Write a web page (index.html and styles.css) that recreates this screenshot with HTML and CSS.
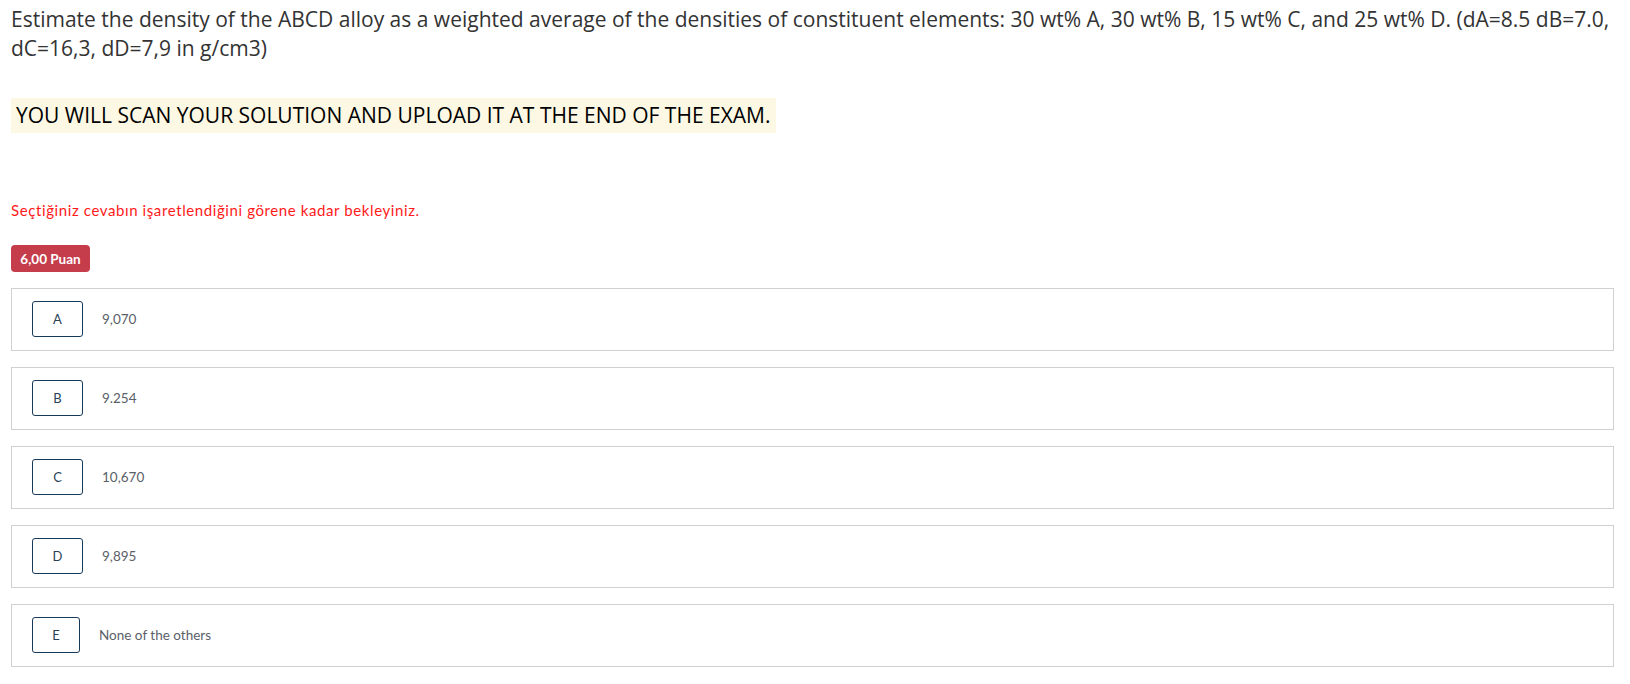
FILE: index.html
```html
<!DOCTYPE html>
<html lang="tr">
<head>
<meta charset="utf-8">
<title>Soru</title>
<link rel="stylesheet" href="styles.css">
</head>
<body>
<div class="page">
  <div class="question">
    <p class="stem">Estimate the density of the ABCD alloy as a weighted average of the densities of constituent elements: 30 wt% A, 30 wt% B, 15 wt% C, and 25 wt% D. (dA=8.5 dB=7.0, dC=16,3, dD=7,9 in g/cm3)</p>
    <p class="notice">YOU WILL SCAN YOUR SOLUTION AND UPLOAD IT AT THE END OF THE EXAM.</p>
  </div>
  <p class="warning">Seçtiğiniz cevabın işaretlendiğini görene kadar bekleyiniz.</p>
  <div class="badge-row"><span class="badge">6,00 Puan</span></div>
  <div class="options">
    <div class="option"><span class="letter">A</span><span class="answer">9,070</span></div>
    <div class="option"><span class="letter">B</span><span class="answer">9.254</span></div>
    <div class="option"><span class="letter">C</span><span class="answer">10,670</span></div>
    <div class="option"><span class="letter">D</span><span class="answer">9,895</span></div>
    <div class="option"><span class="letter letter-narrow">E</span><span class="answer">None of the others</span></div>
  </div>
</div>
</body>
</html>
```
FILE: styles.css
```css
html, body {
  margin: 0;
  padding: 0;
  background: #ffffff;
}

.page {
  padding: 0 16px 0 11px;
  font-family: Lato, "Noto Sans", sans-serif;
}

.question {
  font-family: "Open Sans", "Liberation Sans", sans-serif;
}

.stem {
  margin: 0;
  padding-top: 5px;
  font-size: 21px;
  line-height: 29px;
  color: #333333;
}

.notice {
  display: inline-block;
  margin: 35px 0 0 0;
  padding: 3px 5px 4px 5px;
  background: #fcf8e3;
  color: #000000;
  font-size: 21px;
  line-height: 28px;
}

.warning {
  margin: 67px 0 0 0;
  font-size: 15px;
  letter-spacing: 0.6px;
  line-height: 20px;
  color: #ff1a1a;
}

.badge-row {
  margin-top: 25px;
  display: flex;
}

.badge {
  display: inline-flex;
  align-items: center;
  justify-content: center;
  width: 79px;
  height: 27px;
  border-radius: 4px;
  background: #c53c4b;
  color: #ffffff;
  font-weight: 700;
  font-size: 13.5px;
}

.options {
  margin-top: 16px;
  display: flex;
  flex-direction: column;
  gap: 16px;
}

.option {
  display: flex;
  align-items: center;
  height: 63px;
  box-sizing: border-box;
  border: 1px solid #d0d0d0;
  padding: 0 0 0 20px;
}

.letter {
  display: flex;
  align-items: center;
  justify-content: center;
  width: 51px;
  height: 36px;
  box-sizing: border-box;
  border: 1px solid #163a5a;
  border-radius: 3px;
  color: #2b3f55;
  font-size: 13px;
  margin-top: -2px;
}

.letter-narrow {
  width: 48px;
}

.answer {
  margin-left: 19px;
  font-size: 13.5px;
  color: #5a6068;
  margin-top: -2px;
}
```
